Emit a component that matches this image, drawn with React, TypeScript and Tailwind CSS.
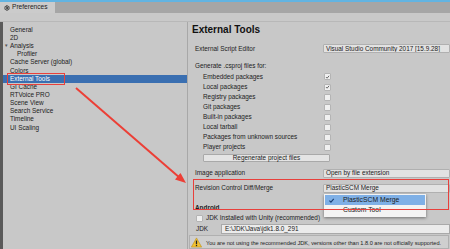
import React from 'react';
import { Settings } from 'lucide-react';

const leftItems: { label: string; indent?: boolean; foldout?: boolean; selected?: boolean }[] = [
  { label: 'General' },
  { label: '2D' },
  { label: 'Analysis', foldout: true },
  { label: 'Profiler', indent: true },
  { label: 'Cache Server (global)' },
  { label: 'Colors' },
  { label: 'External Tools', selected: true },
  { label: 'GI Cache' },
  { label: 'RTVoice PRO' },
  { label: 'Scene View' },
  { label: 'Search Service' },
  { label: 'Timeline' },
  { label: 'UI Scaling' },
];

const csprojItems: { label: string; checked: boolean }[] = [
  { label: 'Embedded packages', checked: true },
  { label: 'Local packages', checked: true },
  { label: 'Registry packages', checked: false },
  { label: 'Git packages', checked: false },
  { label: 'Built-in packages', checked: false },
  { label: 'Local tarball', checked: false },
  { label: 'Packages from unknown sources', checked: false },
  { label: 'Player projects', checked: false },
];

const Check: React.FC<{ className?: string }> = ({ className }) => (
  <svg viewBox="0 0 10 10" className={className}>
    <path d="M2 5.2 L4.2 7.4 L8.2 2.6" fill="none" stroke="currentColor" strokeWidth="1.6" />
  </svg>
);

const Checkbox: React.FC<{ checked: boolean }> = ({ checked }) => (
  <div className="w-[7px] h-[7px] bg-[#f0f0f0] border border-[#b4b4b4] rounded-[1px] flex items-center justify-center text-[#444]">
    {checked && <Check className="w-[6px] h-[6px]" />}
  </div>
);

const Dropdown: React.FC<{ value: string }> = ({ value }) => (
  <div className="flex-1 h-[9px] bg-[#e2e2e2] border border-[#b0b0b0] rounded-[1px] flex items-center pl-[2px] leading-none overflow-hidden whitespace-nowrap">
    {value}
  </div>
);

export default function App() {
  return (
    <div className="relative w-[450px] h-[249px] overflow-hidden bg-[#c8c8c8] text-[#1c1c1c] font-['Liberation_Sans',Arial,sans-serif] text-[6.4px] leading-none">
      {/* window top edge */}
      <div className="h-[2px] bg-[#62b4e2]" />
      {/* tab strip */}
      <div className="h-[11px] bg-[#a6a6a6] flex">
        <div className="w-[55px] bg-[#cbcbcb] flex items-center gap-[2px] pl-[4px] text-[6.6px] text-[#222]">
          <Settings className="w-[6px] h-[6px]" strokeWidth={3} />
          <span>Preferences</span>
        </div>
      </div>
      {/* toolbar */}
      <div className="h-[9px] bg-[#c9c9c9] border-b border-[#b8b8b8]" />

      <div className="flex h-[227px]">
        {/* left tree */}
        <div className="w-[188px] flex border-r border-[#a8a8a8]">
          <div className="w-[3px] bg-[#5a5a5a]" />
          <div className="flex-1 pt-[4px]">
            {leftItems.map((item) => (
              <div
                key={item.label}
                className={`h-[8.15px] flex items-center ${item.selected ? 'bg-[#3a6fb1] text-white' : ''}`}
              >
                <div className={`${item.indent ? 'w-[14px]' : 'w-[7px]'} flex justify-start`}>
                  {item.foldout && <span className="text-[4.5px] text-[#555] pl-[1px]">▼</span>}
                </div>
                <span>{item.label}</span>
              </div>
            ))}
          </div>
        </div>

        {/* right settings */}
        <div className="flex-1 flex flex-col">
          <div className="h-[16px] flex items-center pl-[4px] text-[10px] font-bold text-[#111]">External Tools</div>

          <div className="mt-[6px] h-[10px] flex items-center pl-[7px]">
            <span className="w-[128px]">External Script Editor</span>
            <Dropdown value="Visual Studio Community 2017 [15.9.28]" />
          </div>

          <div className="mt-[7px] h-[11px] flex items-center pl-[7px]">Generate .csproj files for:</div>

          {csprojItems.map((c) => (
            <div key={c.label} className="h-[10.1px] flex items-center pl-[15px]">
              <span className="w-[121px]">{c.label}</span>
              <Checkbox checked={c.checked} />
            </div>
          ))}

          <div className="mt-[1px] pl-[15px] flex">
            <div className="w-[127px] h-[8.5px] bg-[#e4e4e4] border border-[#a9a9a9] rounded-[1px] flex items-center justify-center">
              Regenerate project files
            </div>
          </div>

          <div className="mt-[6px] h-[10px] flex items-center pl-[7px]">
            <span className="w-[128px]">Image application</span>
            <Dropdown value="Open by file extension" />
          </div>

          <div className="mt-[5px] h-[10px] flex items-center pl-[7px]">
            <span className="w-[128px]">Revision Control Diff/Merge</span>
            <Dropdown value="PlasticSCM Merge" />
          </div>

          <div className="mt-[10px] h-[10px] flex items-center pl-[7px] font-bold">Android</div>

          <div className="h-[11px] flex items-center pl-[8px] gap-[3px]">
            <Checkbox checked={false} />
            <span>JDK Installed with Unity (recommended)</span>
          </div>

          <div className="h-[10px] flex items-center pl-[8px]">
            <span className="w-[25px]">JDK</span>
            <div className="flex-1 h-[10px] bg-[#ebebeb] border border-[#a9a9a9] flex items-center pl-[3px]">
              E:\JDK\Java\jdk1.8.0_291
            </div>
          </div>

          <div className="mt-[1px] flex-1 mx-[1px] bg-[#cfcfcf] border border-[#b0b0b0] flex items-start pt-[1px] pl-[1px] gap-[4px]">
            <svg viewBox="0 0 12 11" className="w-[11px] h-[11px] shrink-0">
              <path d="M6 0.5 L11.6 10.5 L0.4 10.5 Z" fill="#f2c230" stroke="#b88a10" strokeWidth="0.6" />
              <rect x="5.3" y="3.4" width="1.4" height="4" fill="#222" />
              <rect x="5.3" y="8.2" width="1.4" height="1.3" fill="#222" />
            </svg>
            <span className="text-[5.6px] whitespace-nowrap pt-[4px]">
              You are not using the recommended JDK, versions other than 1.8.0 are not officially supported.
            </span>
          </div>
        </div>
      </div>

      {/* dropdown popup */}
      <div className="absolute left-[324px] top-[194px] w-[102px] h-[23px] bg-[#f3f3f3] shadow-[0_1px_3px_rgba(0,0,0,0.45)] p-[1px] text-[6.8px]">
        <div className="h-[10px] bg-[#7fb0e6] flex items-center">
          <Check className="w-[7px] h-[7px] ml-[3px] text-[#1a3f73]" />
          <span className="ml-[8px]">PlasticSCM Merge</span>
        </div>
        <div className="h-[11px] flex items-center pl-[18px]">Custom Tool</div>
      </div>

      {/* annotations */}
      <div className="absolute left-[7px] top-[73px] w-[58px] h-[12px] border-[1.5px] border-[#e8403c]" />
      <div className="absolute left-[193px] top-[179px] w-[256px] h-[31px] border-[1.5px] border-[#e8403c]" />
      <svg className="absolute left-0 top-0 w-[450px] h-[249px] pointer-events-none" viewBox="0 0 450 249">
        <line x1="76" y1="88" x2="180" y2="178" stroke="#ec3f36" strokeWidth="2" />
        <path d="M186 183 L175 179.5 L180.5 173 Z" fill="#ec3f36" />
      </svg>
    </div>
  );
}
